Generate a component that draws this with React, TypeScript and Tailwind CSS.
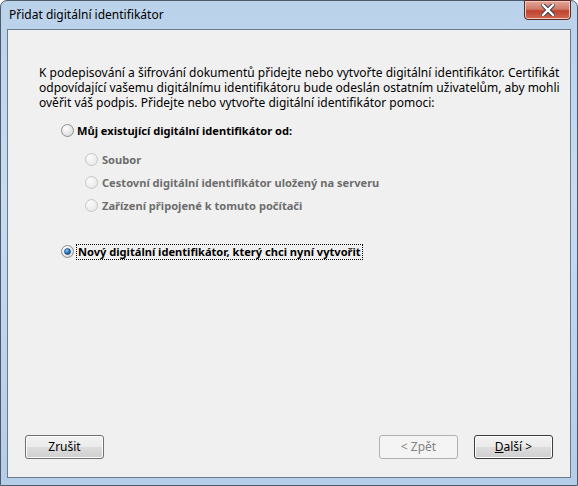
import * as React from "react"

function Radio({ checked = false, disabled = false }: { checked?: boolean; disabled?: boolean }) {
    const fillId = checked ? "rg-on" : disabled ? "rg-dis" : "rg-off"
    return (
        <svg width="13" height="13" viewBox="0 0 13 13" className="shrink-0">
            <defs>
                <radialGradient id={fillId} cx="35%" cy="30%" r="80%">
                    <stop offset="0%" stopColor={disabled ? "#fbfbfb" : "#ffffff"} />
                    <stop offset="100%" stopColor={disabled ? "#e6e6e6" : "#d6d6d6"} />
                </radialGradient>
                <radialGradient id="dot" cx="40%" cy="35%" r="70%">
                    <stop offset="0%" stopColor="#8cd4ff" />
                    <stop offset="60%" stopColor="#1a6fbf" />
                    <stop offset="100%" stopColor="#0d3f7a" />
                </radialGradient>
            </defs>
            <circle
                cx="6.5"
                cy="6.5"
                r="6"
                fill={`url(#${fillId})`}
                stroke={disabled ? "#c5c5c5" : "#8e8f8f"}
                strokeWidth="1"
            />
            {checked && <circle cx="6.5" cy="6.5" r="3" fill="url(#dot)" stroke="#193b6b" strokeWidth="0.6" />}
        </svg>
    )
}

function Btn({ children, disabled = false, isDefault = false, className = "" }: { children: React.ReactNode; disabled?: boolean; isDefault?: boolean; className?: string }) {
    return (
        <button
            type="button"
            className={
                "h-[24px] w-[79px] rounded-[3px] border text-[12px] leading-none flex items-center justify-center " +
                (disabled
                    ? "border-[#adb2b5] bg-[#f4f4f4] text-[#838383] "
                    : isDefault
                    ? "border-[#3c3c3c] bg-[linear-gradient(#f2f2f2_0%,#ebebeb_50%,#dddddd_50%,#cfcfcf_100%)] text-black shadow-[inset_0_0_0_1px_#fcfcfc] "
                    : "border-[#707070] bg-[linear-gradient(#f2f2f2_0%,#ebebeb_50%,#dddddd_50%,#cfcfcf_100%)] text-black shadow-[inset_0_0_0_1px_#fcfcfc] ") +
                className
            }
        >
            {children}
        </button>
    )
}

export default function App() {
    return (
        <div
            className="w-[578px] h-[486px] flex flex-col rounded-t-[7px] border border-[#4d5a68] bg-[linear-gradient(180deg,#bad2ea_0%,#c7dcf1_40%,#b4cde8_100%)] text-black"
            style={{ fontFamily: '"Noto Sans", "Open Sans", sans-serif' }}
        >
            <div className="h-[28px] flex items-start shrink-0">
                <div className="pl-[8px] pt-[6px] text-[12px] leading-[16px] text-black">Přidat digitální identifikátor</div>
                <div className="flex-1" />
                <div className="mr-[6px] -mt-[1px] w-[47px] h-[20px] rounded-b-[4px] border border-[#5a2a24] bg-[linear-gradient(180deg,#e5a79a_0%,#d07a68_45%,#c0412f_55%,#d26a50_100%)] flex items-center justify-center shadow-[inset_0_0_0_1px_#f1c7bd]">
                    <svg width="14" height="12" viewBox="0 0 14 12">
                        <path d="M2 1 L12 11 M12 1 L2 11" stroke="#3a3f4b" strokeWidth="4.4" strokeLinecap="square" />
                        <path d="M2 1 L12 11 M12 1 L2 11" stroke="#ffffff" strokeWidth="2.4" strokeLinecap="square" />
                    </svg>
                </div>
            </div>

            <div className="flex-1 mx-[6px] mb-[7px] border border-[#6a7a8c] bg-[#f0f0f0] flex flex-col text-[12px] leading-[15px]">
                <p className="mt-[35px] pl-[31px]">
                    K podepisování a šifrování dokumentů přidejte nebo vytvořte digitální identifikátor. Certifikát
                    <br />
                    odpovídající vašemu digitálnímu identifikátoru bude odeslán ostatním uživatelům, aby mohli
                    <br />
                    ověřit váš podpis. Přidejte nebo vytvořte digitální identifikátor pomoci:
                </p>

                <div className="mt-[13px] pl-[53px] flex items-center gap-[3px] h-[15px] font-bold text-[11.1px]">
                    <Radio />
                    <span>Můj existující digitální identifikátor od:</span>
                </div>

                <div className="mt-[14px] pl-[77px] flex flex-col gap-[8px] font-bold text-[11.1px] text-[#6d6d6d]">
                    <div className="flex items-center gap-[4px] h-[15px]">
                        <Radio disabled />
                        <span>Soubor</span>
                    </div>
                    <div className="flex items-center gap-[4px] h-[15px]">
                        <Radio disabled />
                        <span>Cestovní digitální identifikátor uložený na serveru</span>
                    </div>
                    <div className="flex items-center gap-[4px] h-[15px]">
                        <Radio disabled />
                        <span>Zařízení připojené k tomuto počítači</span>
                    </div>
                </div>

                <div className="mt-[31px] pl-[53px] flex items-center gap-[2px] h-[15px] font-bold text-[11.1px]">
                    <Radio checked />
                    <span className="border border-dotted border-black px-[1px] leading-[14px]">
                        Nový digitální identifikátor, který chci nyní vytvořit
                    </span>
                </div>

                <div className="flex-1" />

                <div className="flex items-center pl-[17px] pr-[17px] mb-[18px]">
                    <Btn>Zrušit</Btn>
                    <div className="flex-1" />
                    <Btn disabled>&lt; Zpět</Btn>
                    <Btn isDefault className="ml-[16px]">
                        <span>
                            <span className="underline">D</span>alší &gt;
                        </span>
                    </Btn>
                </div>
            </div>
        </div>
    )
}
